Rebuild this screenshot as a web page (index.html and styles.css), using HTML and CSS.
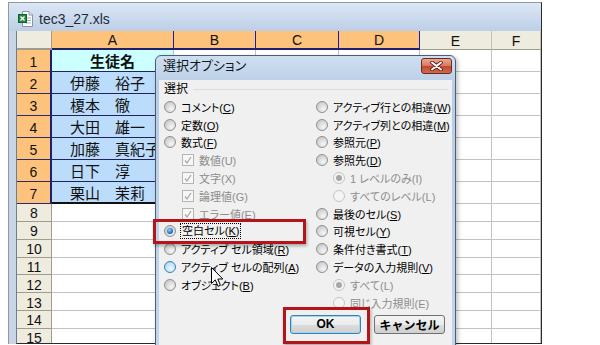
FILE: index.html
```html
<!DOCTYPE html>
<html lang="ja">
<head>
    <meta charset="UTF-8">
    <title>tec3_27.xls - 選択オプション</title>
    <link rel="stylesheet" href="styles.css">
</head>
<body>

    <!-- workbook window -->
    <div class="window">
        <div class="titlebar">
            <svg class="file-icon" width="16" height="16" viewBox="0 0 16 16">
                <path d="M4.5 0.5 H11 L14.5 4 V15.5 H4.5 Z" fill="#fff" stroke="#8a96a6"/>
                <path d="M11 0.5 V4 H14.5" fill="#e4e8ee" stroke="#8a96a6"/>
                <path d="M8 7 H13 M8 9.5 H13 M8 12 H13" stroke="#9fb0c4"/>
                <rect x="0.5" y="3.5" width="8" height="8" fill="#1f8a3a" stroke="#11632a"/>
                <path d="M2.5 5.5 L6.5 9.5 M6.5 5.5 L2.5 9.5" stroke="#fff" stroke-width="1.4"/>
            </svg>
            <span class="file-name">tec3_27.xls</span>
        </div>

        <div class="frame">
            <div class="sheet">
                <div class="row head">
                    <div class="rh corner"></div>
                    <div class="ch sel">A</div>
                    <div class="ch sel">B</div>
                    <div class="ch sel">C</div>
                    <div class="ch sel">D</div>
                    <div class="ch">E</div>
                    <div class="ch">F</div>
                </div>
                <div class="row tall">
                    <div class="rh sel">1</div>
                    <div class="cell name title">生徒名</div>
                    <div class="cell"></div><div class="cell"></div><div class="cell"></div><div class="cell"></div><div class="cell"></div>
                </div>
                <div class="row tall">
                    <div class="rh sel">2</div>
                    <div class="cell name">伊藤　裕子</div>
                    <div class="cell"></div><div class="cell"></div><div class="cell"></div><div class="cell"></div><div class="cell"></div>
                </div>
                <div class="row tall">
                    <div class="rh sel">3</div>
                    <div class="cell name">榎本　徹</div>
                    <div class="cell"></div><div class="cell"></div><div class="cell"></div><div class="cell"></div><div class="cell"></div>
                </div>
                <div class="row tall">
                    <div class="rh sel">4</div>
                    <div class="cell name">大田　雄一</div>
                    <div class="cell"></div><div class="cell"></div><div class="cell"></div><div class="cell"></div><div class="cell"></div>
                </div>
                <div class="row tall">
                    <div class="rh sel">5</div>
                    <div class="cell name">加藤　真紀子</div>
                    <div class="cell"></div><div class="cell"></div><div class="cell"></div><div class="cell"></div><div class="cell"></div>
                </div>
                <div class="row tall">
                    <div class="rh sel">6</div>
                    <div class="cell name">日下　淳</div>
                    <div class="cell"></div><div class="cell"></div><div class="cell"></div><div class="cell"></div><div class="cell"></div>
                </div>
                <div class="row tall">
                    <div class="rh sel">7</div>
                    <div class="cell name last">栗山　茉莉</div>
                    <div class="cell"></div><div class="cell"></div><div class="cell"></div><div class="cell"></div><div class="cell"></div>
                </div>
                <div class="row">
                    <div class="rh">8</div>
                    <div class="cell"></div><div class="cell"></div><div class="cell"></div><div class="cell"></div><div class="cell"></div><div class="cell"></div>
                </div>
                <div class="row">
                    <div class="rh">9</div>
                    <div class="cell"></div><div class="cell"></div><div class="cell"></div><div class="cell"></div><div class="cell"></div><div class="cell"></div>
                </div>
                <div class="row">
                    <div class="rh">10</div>
                    <div class="cell"></div><div class="cell"></div><div class="cell"></div><div class="cell"></div><div class="cell"></div><div class="cell"></div>
                </div>
                <div class="row">
                    <div class="rh">11</div>
                    <div class="cell"></div><div class="cell"></div><div class="cell"></div><div class="cell"></div><div class="cell"></div><div class="cell"></div>
                </div>
                <div class="row">
                    <div class="rh">12</div>
                    <div class="cell"></div><div class="cell"></div><div class="cell"></div><div class="cell"></div><div class="cell"></div><div class="cell"></div>
                </div>
                <div class="row">
                    <div class="rh">13</div>
                    <div class="cell"></div><div class="cell"></div><div class="cell"></div><div class="cell"></div><div class="cell"></div><div class="cell"></div>
                </div>
                <div class="row">
                    <div class="rh">14</div>
                    <div class="cell"></div><div class="cell"></div><div class="cell"></div><div class="cell"></div><div class="cell"></div><div class="cell"></div>
                </div>
                <div class="row last-row">
                    <div class="rh">15</div>
                    <div class="cell"></div><div class="cell"></div><div class="cell"></div><div class="cell"></div><div class="cell"></div><div class="cell"></div>
                </div>
            </div>
        </div>
    </div>

    <!-- go to special dialog -->
    <div class="dialog">
        <div class="dlg-title">
            <span>選択オプション</span>
            <span class="close">
                <svg width="13" height="10" viewBox="0 0 13 10">
                    <path d="M2 1.5 L11 8.5 M11 1.5 L2 8.5" stroke="#5a1d14" stroke-width="3.6" stroke-linecap="round"/>
                    <path d="M2 1.5 L11 8.5 M11 1.5 L2 8.5" stroke="#fff" stroke-width="2" stroke-linecap="round"/>
                </svg>
            </span>
        </div>

        <div class="dlg-body">
            <div class="group-title">選択</div>

            <div class="cols">
                <div class="col left">
                    <div class="opt"><span class="radio"></span><span>コメント(<u>C</u>)</span></div>
                    <div class="opt"><span class="radio"></span><span>定数(<u>O</u>)</span></div>
                    <div class="opt"><span class="radio"></span><span>数式(<u>F</u>)</span></div>
                    <div class="opt sub off"><span class="check"><svg width="10" height="10" viewBox="0 0 10 10"><path d="M2 5.5 L4 8 L8 2" fill="none" stroke="#a9a9a9" stroke-width="1.3"/></svg></span><span>数値(U)</span></div>
                    <div class="opt sub off"><span class="check"><svg width="10" height="10" viewBox="0 0 10 10"><path d="M2 5.5 L4 8 L8 2" fill="none" stroke="#a9a9a9" stroke-width="1.3"/></svg></span><span>文字(X)</span></div>
                    <div class="opt sub off"><span class="check"><svg width="10" height="10" viewBox="0 0 10 10"><path d="M2 5.5 L4 8 L8 2" fill="none" stroke="#a9a9a9" stroke-width="1.3"/></svg></span><span>論理値(G)</span></div>
                    <div class="opt sub off"><span class="check"><svg width="10" height="10" viewBox="0 0 10 10"><path d="M2 5.5 L4 8 L8 2" fill="none" stroke="#a9a9a9" stroke-width="1.3"/></svg></span><span>エラー値(E)</span></div>
                    <div class="opt"><span class="radio on"></span><span class="focus">空白セル(<u>K</u>)</span></div>
                    <div class="opt"><span class="radio"></span><span>アクティブ セル領域(<u>R</u>)</span></div>
                    <div class="opt"><span class="radio hot"></span><span>アクティブ セルの配列(<u>A</u>)</span></div>
                    <div class="opt"><span class="radio"></span><span>オブジェクト(<u>B</u>)</span></div>
                </div>
                <div class="col right">
                    <div class="opt"><span class="radio"></span><span>アクティブ行との相違(<u>W</u>)</span></div>
                    <div class="opt"><span class="radio"></span><span>アクティブ列との相違(<u>M</u>)</span></div>
                    <div class="opt"><span class="radio"></span><span>参照元(<u>P</u>)</span></div>
                    <div class="opt"><span class="radio"></span><span>参照先(<u>D</u>)</span></div>
                    <div class="opt sub off"><span class="radio on"></span><span>1 レベルのみ(I)</span></div>
                    <div class="opt sub off"><span class="radio"></span><span>すべてのレベル(L)</span></div>
                    <div class="opt"><span class="radio"></span><span>最後のセル(<u>S</u>)</span></div>
                    <div class="opt"><span class="radio"></span><span>可視セル(<u>Y</u>)</span></div>
                    <div class="opt"><span class="radio"></span><span>条件付き書式(<u>T</u>)</span></div>
                    <div class="opt"><span class="radio"></span><span>データの入力規則(<u>V</u>)</span></div>
                    <div class="opt sub off"><span class="radio on"></span><span>すべて(L)</span></div>
                    <div class="opt sub off"><span class="radio"></span><span>同じ入力規則(E)</span></div>
                </div>
            </div>

            <div class="buttons">
                <button class="btn default">OK</button>
                <button class="btn">キャンセル</button>
            </div>
        </div>
    </div>

    <!-- highlight boxes drawn over the screenshot -->
    <div class="mark mark-blank"></div>
    <div class="mark mark-ok"></div>

    <!-- mouse pointer -->
    <svg class="pointer" width="13" height="21" viewBox="0 0 13 21">
        <path d="M0.5 0.5 L0.5 16.5 L4.3 12.9 L7 19.3 L9.4 18.3 L6.8 12 L11.8 12 Z" fill="#fff" stroke="#000"/>
    </svg>

</body>
</html>
```

FILE: styles.css
```css
/* General styling */
body {
    margin: 0;
    width: 600px;
    height: 345px;
    overflow: hidden;
    position: relative;
    background-color: #fff;
    font-family: "Liberation Sans", "Noto Sans CJK JP", sans-serif;
}

/* Workbook window */
.window {
    margin: 2px 0 0 8px;
    width: 532px;
    border: 1px solid #8d99a8;
    border-right-color: #2b2b2b;
    border-bottom: none;
}

.titlebar {
    height: 28px;
    box-sizing: border-box;
    padding: 8px 0 0 9px;
    display: flex;
    align-items: flex-start;
    gap: 5px;
    background: linear-gradient(#dce7f4, #bccfe7);
}

.file-name {
    font-size: 14px;
    line-height: 16px;
    color: #1e2a3a;
}

.frame {
    padding-left: 7px;
    background-color: #c9d5e6;
}

/* Sheet grid */
.sheet {
    height: 312px;
    overflow: hidden;
    border-left: 1px solid #6f7d8f;
    border-bottom: 1px solid #2b2b2b;
    background-color: #fff;
}

.row {
    display: grid;
    grid-template-columns: 35px 122px 82px 83px 81px 72px 49px;
    height: 17.85px;
}

.row.head {
    height: 19px;
}

.row.tall {
    height: 22px;
}

.row > div {
    box-sizing: border-box;
    display: flex;
    align-items: center;
    overflow: hidden;
    white-space: nowrap;
}

/* the last row is cut by the window edge */
.row.last-row > div {
    align-items: flex-start;
}

/* column and row headers */
.ch,
.rh {
    justify-content: center;
    font-size: 14px;
    color: #111;
    background-color: #eeebdf;
    border-right: 1px solid #c6c2ae;
    border-bottom: 1px solid #a09d8c;
}

.ch {
    padding-top: 1px;
}

.ch.sel {
    background-color: #fdc27b;
    border-right-color: #1d1da6;
    border-bottom: 2px solid #1f1f6c;
}

.rh {
    padding-top: 2px;
    border-right-color: #a09d8c;
}

.rh.corner {
    border-bottom: 2px solid #a09d8c;
}

.rh.sel {
    background-color: #fdc27b;
    border-right: 2px solid #1f1f6c;
    border-bottom-color: #2b2b66;
}

.last-row .rh {
    line-height: 14px;
}

.cell {
    border-right: 1px solid #c2c2c2;
    border-bottom: 1px solid #c2c2c2;
}

/* student list */
.cell.name {
    padding-left: 18px;
    font-size: 15px;
    font-family: "Noto Sans CJK JP", sans-serif;
    color: #111;
    background-color: #bcdcfb;
    border-bottom-color: #22225e;
}

.cell.title {
    justify-content: center;
    padding-left: 0;
    font-weight: bold;
    background-color: #ccffff;
}

.cell.last {
    border-bottom: 2px solid #111;
}

/* Dialog */
.dialog {
    position: absolute;
    left: 155px;
    top: 55px;
    width: 301px;
    height: 300px;
    box-sizing: border-box;
    padding: 0 3px;
    border: 1px solid #4c5e72;
    border-radius: 6px 6px 0 0;
    background: linear-gradient(#cfdff1, #b8cde6 30px, #c3d5ea);
    box-shadow: 2px 2px 4px rgba(0, 0, 0, 0.25);
    font-family: "Liberation Sans", "Noto Sans CJK JP", sans-serif;
    font-size: 11px;
    font-feature-settings: "palt";
}

.dlg-title {
    height: 24px;
    box-sizing: border-box;
    padding: 2px 0 0 4px;
    display: flex;
    justify-content: space-between;
    align-items: flex-start;
    font-size: 13px;
    line-height: 16px;
    color: #101820;
}

.close {
    width: 31px;
    height: 16px;
    box-sizing: border-box;
    display: flex;
    align-items: center;
    justify-content: center;
    border: 1px solid #6d2a1f;
    border-radius: 3px;
    background: linear-gradient(#eaa996, #d7755e 50%, #c2462f 51%, #d0694c);
}

.dlg-body {
    height: 280px;
    padding: 1px 0 0 5px;
    background-color: #f0f0f0;
    color: #000;
}

.group-title {
    height: 16px;
    line-height: 16px;
    margin-bottom: 1px;
    display: flex;
    align-items: center;
    font-size: 12px;
}

.group-title::after {
    content: "";
    flex: 1;
    margin: 1px 4px 0 5px;
    border-top: 1px solid #d3dde6;
}

.cols {
    display: flex;
}

.col.left {
    width: 152px;
    flex: none;
}

.opt {
    height: 17.8px;
    display: flex;
    align-items: center;
    gap: 5px;
    white-space: nowrap;
}

.left .opt.sub {
    padding-left: 18px;
}

.right .opt.sub {
    padding-left: 17px;
}

.opt.off {
    color: #8d8d8d;
}

u {
    text-decoration-thickness: 1px;
    text-underline-offset: 1px;
}

.focus {
    padding: 0 1px;
    outline: 1px dotted #000;
    line-height: 14px;
}

/* radio buttons */
.radio {
    width: 12px;
    height: 12px;
    box-sizing: border-box;
    flex: none;
    border-radius: 50%;
    border: 1px solid #8e8f8f;
    background: radial-gradient(circle at 65% 70%, #f6f6f6, #d4d4d4 60%, #c2c2c2);
    display: flex;
    align-items: center;
    justify-content: center;
}

.radio.on::after {
    content: "";
    width: 6px;
    height: 6px;
    border-radius: 50%;
    background: radial-gradient(circle at 40% 35%, #8fd2ff, #1d6fcf 60%, #0c4a98);
}

.radio.hot {
    border-color: #3c7fb1;
    background: radial-gradient(circle at 60% 65%, #f0faff, #b9e2f8 60%, #8ccbee);
}

.off .radio {
    border-color: #c4c4c4;
    background: #f4f4f4;
}

.off .radio.on::after {
    background: #a7a7a7;
}

/* disabled check boxes */
.check {
    width: 12px;
    height: 12px;
    box-sizing: border-box;
    flex: none;
    border: 1px solid #b4b4b4;
    background-color: #f7f7f7;
    display: flex;
    align-items: center;
    justify-content: center;
}

/* OK / Cancel */
.buttons {
    margin-top: 3px;
    padding-right: 7px;
    display: flex;
    justify-content: flex-end;
    gap: 13px;
}

.btn {
    width: 71px;
    height: 19px;
    padding: 0;
    border: 1px solid #707070;
    border-radius: 3px;
    background: linear-gradient(#f4f4f4, #ebebeb 50%, #dcdcdc 51%, #d0d0d0);
    font-family: "Liberation Sans", "Noto Sans CJK JP", sans-serif;
    font-size: 12px;
    font-weight: bold;
    color: #000;
}

.btn.default {
    border-color: #3c7fb1;
    box-shadow: inset 0 0 0 1px #9cd6f5;
}

/* red marker boxes */
.mark {
    position: absolute;
    border: 3px solid #b5141a;
    box-shadow: 1px 2px 3px rgba(0, 0, 0, 0.3);
}

.mark-blank {
    left: 153px;
    top: 219px;
    width: 147px;
    height: 19px;
}

.mark-ok {
    left: 283px;
    top: 307px;
    width: 81px;
    height: 31px;
}

.pointer {
    position: absolute;
    left: 211px;
    top: 267px;
}
```
